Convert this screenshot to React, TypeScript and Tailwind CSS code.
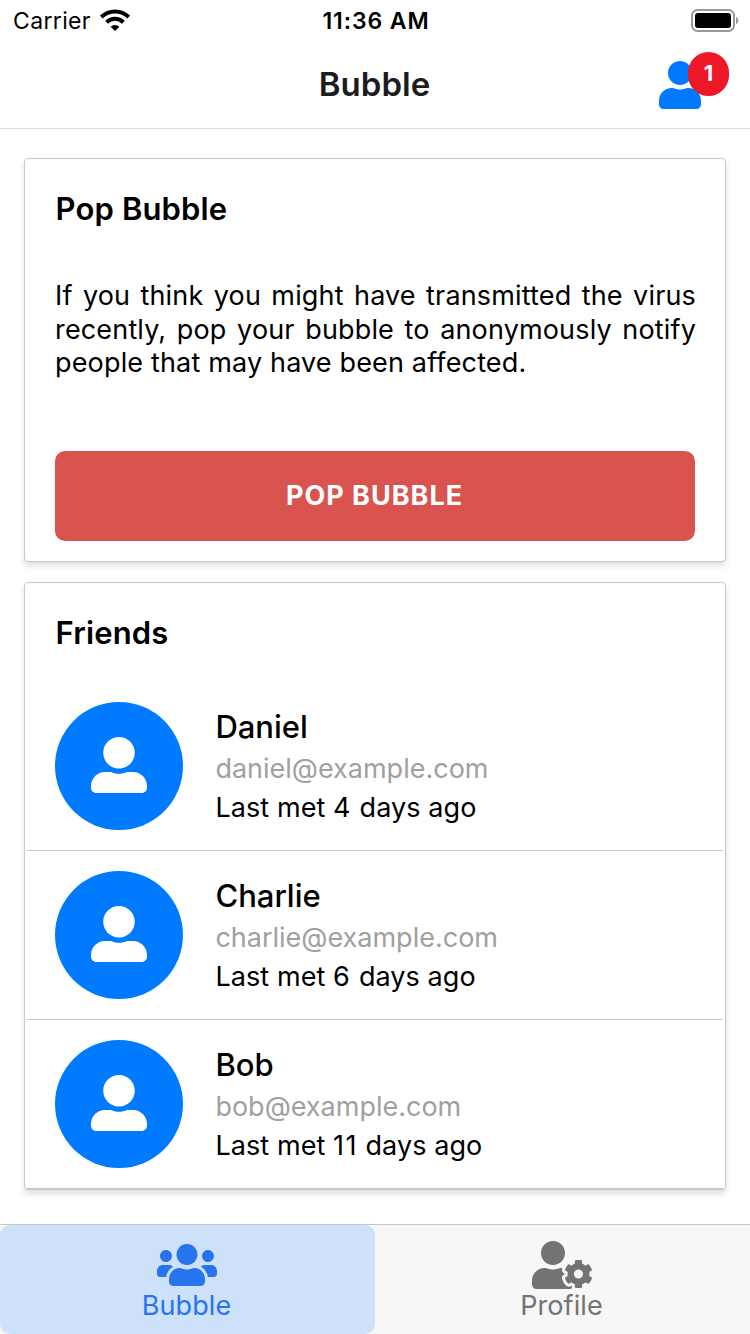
import type { ReactNode } from "react";
import { FaUser, FaUserAlt, FaUserCog, FaUsers } from "react-icons/fa";

type Friend = { name: string; email: string; days: number };

const friends: Friend[] = [
  { name: "Daniel", email: "daniel@example.com", days: 4 },
  { name: "Charlie", email: "charlie@example.com", days: 6 },
  { name: "Bob", email: "bob@example.com", days: 11 },
];

function StatusBar() {
  return (
    <div className="grid h-10 grid-cols-3 items-center pl-[13px] pr-[11px] text-black">
      <div className="flex items-center gap-[9px]">
        <span className="pt-px text-[23px] leading-10 tracking-[0.35px]">Carrier</span>
        <svg width="30" height="23" viewBox="0 0 30 23" fill="none" stroke="#000">
          <path d="M1.3 8.1A19.6 19.6 0 0 1 28.7 8.1" strokeWidth="4.2" />
          <path d="M6.6 13.3A12 12 0 0 1 23.4 13.3" strokeWidth="4" />
          <path d="M15 22 10.6 17.7A6.4 6.4 0 0 1 19.4 17.7Z" fill="#000" stroke="none" />
        </svg>
      </div>
      <div className="whitespace-nowrap pt-px text-center text-[23px] font-semibold leading-10 tracking-[0.9px]">
        11:36 AM
      </div>
      <svg className="justify-self-end" width="48" height="24" viewBox="0 0 48 24">
        <rect x="1" y="1" width="42" height="21" rx="5.5" fill="none" stroke="#999" strokeWidth="2" />
        <rect x="4" y="4" width="36" height="15" rx="3" fill="#000" />
        <path d="M45 8v7c1.800-.6 2.300-2 2.300-3.500S46.800 8.600 45 8Z" fill="#999" />
      </svg>
    </div>
  );
}

function Header() {
  return (
    <div className="grid h-[89px] grid-cols-[1fr_auto_1fr] items-center border-b border-[#e0e0e0]">
      <span />
      <h1 className="pr-px text-[33px] font-semibold leading-10 text-[#1c1c1e]">Bubble</h1>
      <div className="relative mr-[49px] mt-[2px] h-12 w-[42px] justify-self-end">
        <FaUser className="h-12 w-[42px] text-[#007aff]" />
        <span className="absolute left-[29px] top-[-9px] flex h-[44px] w-[41px] items-center justify-center rounded-full bg-[#ef1828] pb-px text-[22px] font-bold text-white">
          1
        </span>
      </div>
    </div>
  );
}

function Card({ title, children }: { title: string; children: ReactNode }) {
  return (
    <section className="rounded-[4px] border border-[#c8c8c8] bg-white shadow-[0_4px_6px_rgba(0,0,0,0.13)]">
      <h2 className="pl-[30.5px] pt-[30px] text-[31px] font-semibold leading-10 tracking-[0.15px] text-black">
        {title}
      </h2>
      {children}
    </section>
  );
}

function FriendRow({ friend }: { friend: Friend }) {
  return (
    <li className="flex h-[169px] items-center border-b border-[#c8c8c8] pl-[28px]">
      <span className="flex size-32 items-center justify-center rounded-full bg-[#007aff] pb-[2px]">
        <FaUserAlt className="size-14 text-white" />
      </span>
      <div className="ml-[32.4px] flex flex-col pb-px text-[27px]">
        <span className="text-[31px] font-medium leading-[42px] text-black">{friend.name}</span>
        <span className="leading-[41px] text-[#a0a0a0]">{friend.email}</span>
        <span className="leading-[37px] tracking-[0.08px] text-black">
          Last met <span className="tracking-[1.4px]">{friend.days}</span> days ago
        </span>
      </div>
    </li>
  );
}

export default function App() {
  return (
    <div className="flex h-[1334px] w-[750px] flex-col overflow-hidden bg-white font-['Inter',sans-serif]">
      <StatusBar />
      <Header />
      <main className="flex flex-1 flex-col gap-5 px-6 pt-[29px]">
        <Card title="Pop Bubble">
          <div className="flex h-[332px] flex-col justify-between px-[30px] pb-5 pt-[50px]">
            <p className="-mr-px text-justify text-[27px] leading-[33.5px] tracking-[0.16px] text-black">
              If you think you might have transmitted the virus recently, pop your bubble to anonymously notify
              people that may have been affected.
            </p>
            <button className="h-[90px] rounded-[10px] bg-[#d9534f] pr-px text-[27px] font-bold tracking-[1px] text-white">
              POP BUBBLE
            </button>
          </div>
        </Card>
        <Card title="Friends">
          <ul className="mt-[29px] px-[2px]">
            {friends.map((friend) => (
              <FriendRow key={friend.email} friend={friend} />
            ))}
          </ul>
        </Card>
      </main>
      <nav className="grid h-[110px] grid-cols-2 border-t border-[#c8c8c8] bg-[#f7f7f7]">
        <a className="flex flex-col items-center rounded-[10px] bg-[#cde1f9] pr-[2px] pt-4 text-[#2874f0]">
          <FaUsers className="h-12 w-[60px]" />
          <span className="mt-px text-[27px] leading-8 tracking-[0.1px]">Bubble</span>
        </a>
        <a className="flex flex-col items-center pr-[2px] pt-4 text-[#737373]">
          <FaUserCog className="h-12 w-[60px]" />
          <span className="mt-px text-[27px] leading-8 tracking-[0.1px]">Profile</span>
        </a>
      </nav>
    </div>
  );
}
